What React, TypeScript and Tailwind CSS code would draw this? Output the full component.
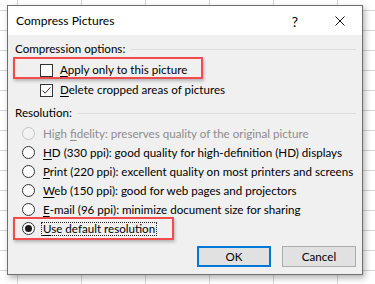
import React from "react";

const font = { fontFamily: 'Lato, "Noto Sans", sans-serif' };

const Key = ({ k, rest }: { k: string; rest: string }) => (
  <span className="whitespace-nowrap">
    <span className="underline underline-offset-2">{k}</span>
    {rest}
  </span>
);

const Checkbox = ({ checked }: { checked?: boolean }) => (
  <span className="flex h-[13px] w-[13px] shrink-0 items-center justify-center border border-[#333333] bg-white">
    {checked && (
      <svg width="11" height="11" viewBox="0 0 11 11">
        <path d="M1.5 5.5 L4.2 8.2 L9.5 2.2" fill="none" stroke="#333333" strokeWidth="1" />
      </svg>
    )}
  </span>
);

const Radio = ({ selected, disabled }: { selected?: boolean; disabled?: boolean }) => (
  <span
    className={
      disabled
        ? "flex h-[13px] w-[13px] shrink-0 items-center justify-center rounded-full border border-[#c4c4c4] bg-[#f3f3f3]"
        : "flex h-[13px] w-[13px] shrink-0 items-center justify-center rounded-full border border-[#333333] bg-white"
    }
  >
    {selected && <span className="h-[7px] w-[7px] rounded-full bg-[#1a1a1a]" />}
  </span>
);

const GroupHeader = ({ title }: { title: string }) => (
  <div className="flex h-[14px] items-center gap-[6px] pl-[7px] pr-[6px]">
    <span className="whitespace-nowrap">{title}</span>
    <span className="h-px flex-1 bg-[#dcdcdc]" />
  </div>
);

const RESOLUTIONS = [
  { k: "H", rest: "D (330 ppi): good quality for high-definition (HD) displays" },
  { k: "P", rest: "rint (220 ppi): excellent quality on most printers and screens" },
  { k: "W", rest: "eb (150 ppi): good for web pages and projectors" },
  { k: "E", rest: "-mail (96 ppi): minimize document size for sharing" },
];

export default function App() {
  return (
    <div
      className="h-[284px] w-[375px] overflow-hidden bg-white bg-[linear-gradient(to_right,#d6d6d6_1px,transparent_1px),linear-gradient(to_bottom,#d6d6d6_1px,transparent_1px)] bg-[size:64px_20px] bg-[position:17px_10px] pl-[7px] pt-[5px] text-[11.6px] text-black"
      style={font}
    >
      <div className="flex w-[356px] flex-col border border-[#6f6f6f] bg-[#f0f0f0] shadow-[2px_3px_6px_rgba(0,0,0,0.3)]">
        {/* title bar */}
        <div className="flex h-[29px] items-center bg-white pl-[8px] pt-[1px]">
          <span className="flex-1 whitespace-nowrap text-[12.1px]">Compress Pictures</span>
          <span className="w-[20px] text-center text-[14px]">?</span>
          <span className="ml-[30px] mr-[17px] flex h-[10px] w-[10px]">
            <svg width="10" height="10" viewBox="0 0 10 10">
              <path d="M0.5 0.5 L9.5 9.5 M9.5 0.5 L0.5 9.5" stroke="#111" strokeWidth="1" />
            </svg>
          </span>
        </div>

        {/* body */}
        <div className="flex flex-col pb-[7px] pt-[7px]">
          <GroupHeader title="Compression options:" />

          <div className="mt-[4px] flex flex-col">
            <div className="relative flex h-[20px] items-center gap-[7px] pl-[32px]">
              <span className="absolute left-[5px] top-[-3px] h-[22px] w-[190px] border-2 border-[#f24a4d] shadow-[1px_2px_3px_rgba(0,0,0,0.25)]" />
              <Checkbox />
              <Key k="A" rest="pply only to this picture" />
            </div>
            <div className="flex h-[20px] items-center gap-[7px] pl-[32px]">
              <Checkbox checked />
              <Key k="D" rest="elete cropped areas of pictures" />
            </div>
          </div>

          <div className="mt-[6px]">
            <GroupHeader title="Resolution:" />
          </div>

          <div className="mt-[4px] flex flex-col">
            <div className="flex h-[19px] items-center gap-[8px] pl-[14px]">
              <Radio disabled />
              <span className="whitespace-nowrap text-[#8c8c8c]">
                High <span className="underline underline-offset-2">f</span>idelity: preserves quality of the original picture
              </span>
            </div>
            {RESOLUTIONS.map((r) => (
              <div key={r.k} className="flex h-[19px] items-center gap-[8px] pl-[14px]">
                <Radio />
                <Key k={r.k} rest={r.rest} />
              </div>
            ))}
            <div className="relative flex h-[19px] items-center gap-[6px] pl-[14px]">
              <span className="absolute left-[5px] top-[-2px] h-[23px] w-[161px] border-2 border-[#f24a4d] shadow-[1px_2px_3px_rgba(0,0,0,0.25)]" />
              <Radio selected />
              <span className="border border-dotted border-[#222] px-[1px] leading-[12px]">
                <Key k="U" rest="se default resolution" />
              </span>
            </div>
          </div>

          <div className="mt-[8px] flex justify-end gap-[11px] pr-[6px]">
            <button className="h-[21px] w-[74px] border-2 border-[#0078d7] bg-[#e1e1e1] text-[11.6px]">OK</button>
            <button className="h-[21px] w-[74px] border border-[#adadad] bg-[#e1e1e1] text-[11.6px]">Cancel</button>
          </div>
        </div>
      </div>
    </div>
  );
}
